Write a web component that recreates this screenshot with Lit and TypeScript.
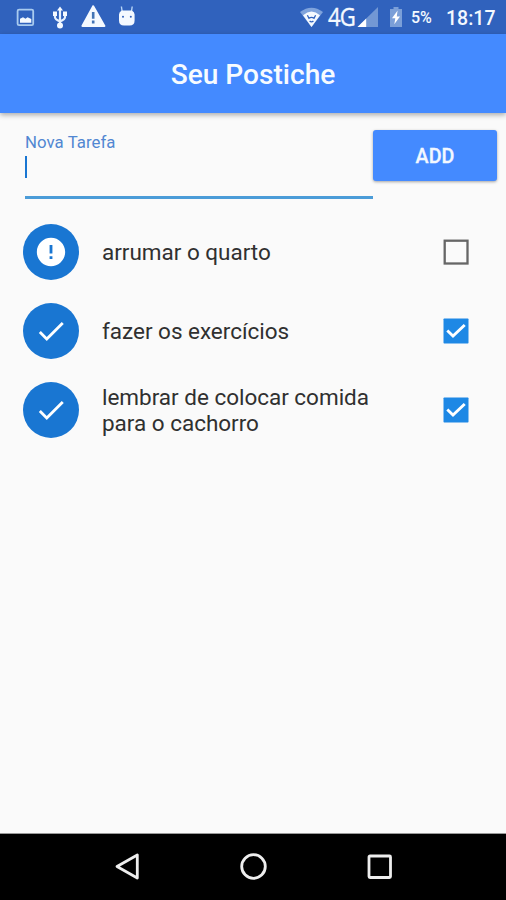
import { LitElement, html, svg, css } from "lit";
import { customElement, property } from "lit/decorators.js";

const checkPath = "M9 16.17L4.83 12l-1.42 1.41L9 19 21 7l-1.41-1.41z";

@customElement("status-bar")
class StatusBar extends LitElement {
  static styles = css`
    :host { display: flex; justify-content: space-between; height: 34px; background: #3062bd; color: #f4f9ff; box-sizing: border-box; padding: 0 11px 0 16px; }
    .group { display: flex; align-items: center; }
    svg { display: block; flex: none; }
    .usb { margin-left: 18px; }
    .warn { margin-left: 14px; }
    .droid { margin-left: 12px; margin-right: 1px; }
    .net { font: 400 26px/34px "Open Sans", "Noto Sans", sans-serif; width: 28px; margin-left: 5px; white-space: nowrap; letter-spacing: -1px; -webkit-text-stroke: 0.4px #f4f9ff; }
    .net span { display: inline-block; transform: translateY(-1px) scaleX(0.85); transform-origin: left; }
    .signal { margin-left: 1px; }
    .battery { margin-left: 11px; }
    .percent { font: 500 16px/38px Roboto, sans-serif; width: 22px; margin-left: 8px; white-space: nowrap; }
    .percent span { display: inline-block; transform: translateY(1px); }
    .clock { font: 500 19.5px/34px Roboto, sans-serif; width: 49px; margin-left: 13px; padding-top: 3px; white-space: nowrap; }
  `;
  render() {
    return html`
      <div class="group">
        <svg width="19" height="34" viewBox="0 0 19 34">
          <rect x="1.6" y="9.6" width="15.6" height="15.6" rx="1.5" fill="none" stroke="#a9cbef" stroke-width="1.8" />
          <path d="M4 22.800v-4l3-1.500 2.500 1.500 2-1.500 3.800 1.700v3.800z" fill="#f4f9ff" />
        </svg>
        <svg class="usb" width="14" height="34" viewBox="0 0 14 34">
          <g fill="none" stroke="#e4f0ff" stroke-width="2.200">
            <path d="M7 10v15M2 14v3.200q0 2 5 4.300M12 13v4.200q0 2-5 4.300" />
          </g>
          <path d="M7 6.600l3 4H4zM0 11.500h4v4.500H0zM10 11.500h4v4.500h-4z" fill="#f4f9ff" />
          <circle cx="7" cy="25.500" r="3" fill="#f4f9ff" />
        </svg>
        <svg class="warn" width="25" height="34" viewBox="0 0 25 34">
          <path d="M12.200 6.200L1.400 25.900h22z" fill="#f4f9ff" stroke="#f4f9ff" stroke-width="2" stroke-linejoin="round" />
          <path d="M12.200 12v6.800M12.200 20.600v2.800" stroke="#4274b5" stroke-width="2.600" />
        </svg>
        <svg class="droid" width="18" height="34" viewBox="0 0 18 34">
          <path d="M4.200 12L3.400 6.500M13.400 12l.8-5.500" stroke="#b8d6f7" stroke-width="1.400" />
          <path d="M3.800 10.400h10q2.800 1.600 2.800 4.200v6q0 5-5 5H6q-5 0-5-5v-6q0-2.600 2.800-4.200z" fill="#f4f9ff" />
          <circle cx="5" cy="16.800" r="1" fill="#3062bd" /><circle cx="12.800" cy="16.800" r="1" fill="#3062bd" />
        </svg>
      </div>
      <div class="group">
        <svg width="23" height="34" viewBox="0 0 23 34">
          <path d="M0 12Q11.500 3.500 23 12L11.500 27z" fill="#7fa3dc" />
          <path d="M3 15.200Q11.500 7.800 20 15.200L11.500 27z" fill="#f4f9ff" />
          <path d="M7.400 15.200l1.600 3q2.500-1.600 5 0l1.600-3M9.600 21q1.900 1.800 3.800 0" fill="none" stroke="#3062bd" stroke-width="1.300" />
        </svg>
        <div class="net"><span>4G</span></div>
        <svg class="signal" width="21" height="34" viewBox="0 0 21 34">
          <path d="M21 7v20H.5z" fill="#7398d4" /><path d="M9.200 18.500V27H.5z" fill="#fff" />
        </svg>
        <svg class="battery" width="14" height="34" viewBox="0 0 14 34">
          <path d="M4.500 7h5v2H13v18H1V9h3.500z" fill="#7b9fd8" />
          <path d="M8.600 10.500L3 18.300h3.300l-1 6 5.700-7.800H7.800z" fill="#fff" />
        </svg>
        <div class="percent"><span>5%</span></div>
        <div class="clock">18:17</div>
      </div>`;
  }
}

@customElement("task-row")
class TaskRow extends LitElement {
  @property() label = "";
  @property({ type: Boolean }) done = false;
  static styles = css`
    :host { display: flex; align-items: center; height: 79px; padding: 0 37px 0 23px; box-sizing: border-box; }
    .avatar { width: 56px; height: 56px; border-radius: 50%; background: #1976d2; display: flex; align-items: center; justify-content: center; flex: none; }
    .text { flex: 1; margin: 0 40px 0 23px; padding-top: 1px; font: 400 22.5px/26px Roboto, sans-serif; color: #303030; letter-spacing: -0.02px; }
    svg { display: block; flex: none; }
  `;
  render() {
    return html`
      <div class="avatar">
        <svg width="34" height="34" viewBox="0 0 24 24" fill="#fff">
          ${this.done
            ? svg`<path d=${checkPath} />`
            : svg`<path d="M12 2C6.480 2 2 6.480 2 12s4.480 10 10 10 10-4.480 10-10S17.520 2 12 2zm1 15h-2v-2h2v2zm0-4h-2V7h2v6z" />`}
        </svg>
      </div>
      <div class="text">${this.label}</div>
      <svg width="26" height="26" viewBox="0 0 26 26">
        ${this.done
          ? svg`<rect x=".5" y=".5" width="25" height="25" rx=".8" fill="#1e88e5" /><path d="M4.300 12.500l5.700 5.500L21.700 7" fill="none" stroke="#fff" stroke-width="2.900" />`
          : svg`<rect x="1.700" y="1.700" width="22.800" height="22.800" fill="none" stroke="#666" stroke-width="2.300" />`}
      </svg>`;
  }
}

@customElement("app-root")
class AppRoot extends LitElement {
  tasks = [
    { label: "arrumar o quarto", done: false },
    { label: "fazer os exercícios", done: true },
    { label: "lembrar de colocar comida para o cachorro", done: true },
  ];
  static styles = css`
    :host { display: flex; flex-direction: column; height: 900px; background: #fafafa; font-family: Roboto, sans-serif; overflow: hidden; }
    .bar { height: 79px; flex: none; background: #448aff; color: #f7fbff; font: 500 28.1px/82px Roboto, sans-serif; text-align: center; box-shadow: 0 2px 5px rgba(0, 0, 0, 0.32); }
    .entry { display: flex; padding: 17px 9px 0 25px; height: 99px; box-sizing: border-box; flex: none; }
    .field { width: 348px; height: 69px; box-sizing: border-box; border-bottom: 3px solid #4b9cd8; display: flex; flex-direction: column; }
    .label { font-size: 16.800px; line-height: 24px; color: #5187d2; letter-spacing: 0.05px; }
    .caret { width: 2px; height: 22px; background: #1976d2; margin-top: 2px; }
    .add { flex: 1; height: 51px; border-radius: 3px; background: #448aff; color: #f3f8ff; font: 500 19.700px/53px Roboto, sans-serif; text-align: center; -webkit-text-stroke: 0.3px #f3f8ff; box-shadow: 0 1px 3px rgba(0, 0, 0, 0.35); }
    .list { flex: 1; }
    .nav { height: 67px; flex: none; background: #000; border-top: 1px solid #999; box-sizing: border-box; display: flex; justify-content: center; align-items: center; gap: 98px; }
    .nav svg { display: block; }
  `;
  render() {
    return html`
      <status-bar></status-bar>
      <div class="bar">Seu Postiche</div>
      <div class="entry">
        <div class="field"><div class="label">Nova Tarefa</div><div class="caret"></div></div>
        <div class="add">ADD</div>
      </div>
      <div class="list">
        ${this.tasks.map((t) => html`<task-row .label=${t.label} .done=${t.done}></task-row>`)}
      </div>
      <div class="nav">
        <svg width="28" height="28" viewBox="0 0 28 28" fill="none" stroke="#eee" stroke-width="2.800" stroke-linejoin="round"><path d="M4 13.500L24.300 2v23z" /></svg>
        <svg width="28" height="28" viewBox="0 0 28 28" fill="none" stroke="#eee" stroke-width="2.800"><circle cx="14.500" cy="13.500" r="11.800" /></svg>
        <svg width="28" height="28" viewBox="0 0 28 28" fill="none" stroke="#eee" stroke-width="2.800"><rect x="4" y="3" width="21.500" height="21.500" rx="1" /></svg>
      </div>`;
  }
}
